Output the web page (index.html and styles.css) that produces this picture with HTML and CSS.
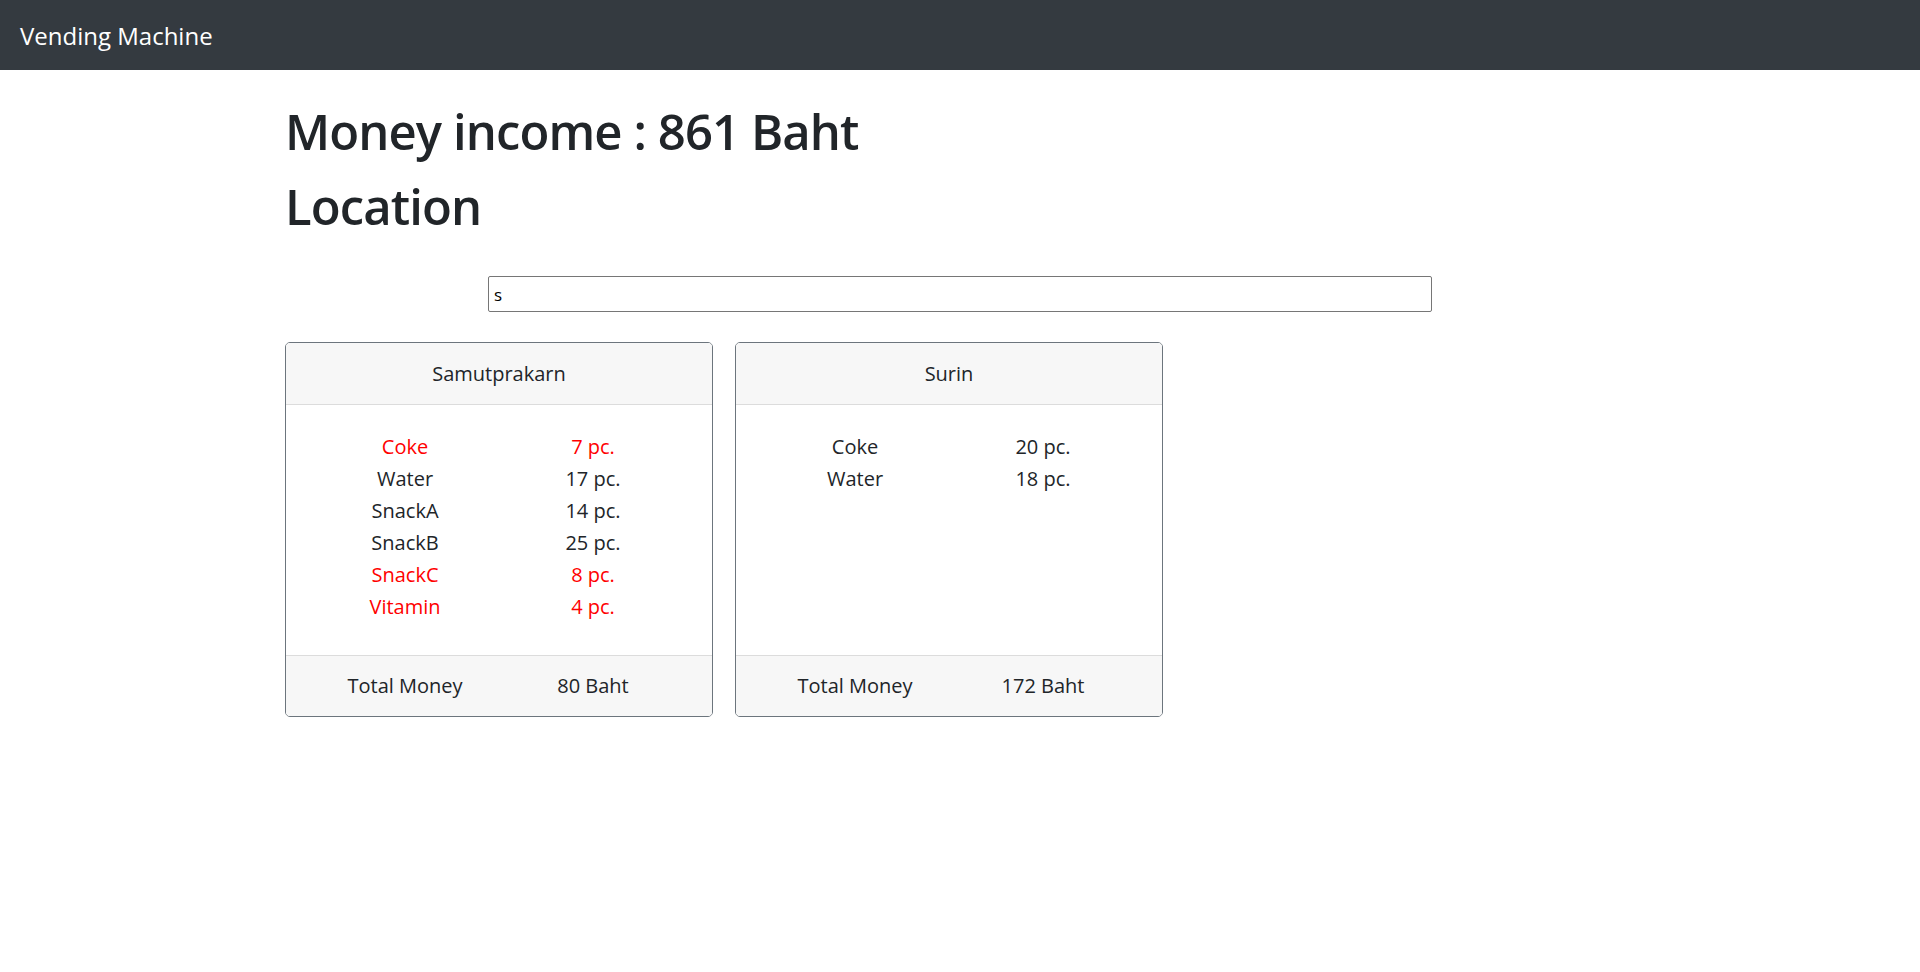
FILE: index.html
```html
<!DOCTYPE html>
<html lang="en">
<head>
<meta charset="utf-8">
<title>Vending Machine</title>
<link rel="stylesheet" href="styles.css">
</head>
<body>
<nav class="navbar">
  <span class="brand">Vending Machine</span>
</nav>
<main class="container">
  <h1 class="title">Money income : 861 Baht</h1>
  <h1 class="title second">Location</h1>
  <div class="search-row">
    <input class="search" type="text" value="s">
  </div>
  <div class="cards">
    <div class="card">
      <div class="card-header">Samutprakarn</div>
      <div class="card-body">
        <div class="row low"><span>Coke</span><span>7 pc.</span></div>
        <div class="row"><span>Water</span><span>17 pc.</span></div>
        <div class="row"><span>SnackA</span><span>14 pc.</span></div>
        <div class="row"><span>SnackB</span><span>25 pc.</span></div>
        <div class="row low"><span>SnackC</span><span>8 pc.</span></div>
        <div class="row low"><span>Vitamin</span><span>4 pc.</span></div>
      </div>
      <div class="card-footer row"><span>Total Money</span><span>80 Baht</span></div>
    </div>
    <div class="card">
      <div class="card-header">Surin</div>
      <div class="card-body">
        <div class="row"><span>Coke</span><span>20 pc.</span></div>
        <div class="row"><span>Water</span><span>18 pc.</span></div>
      </div>
      <div class="card-footer row"><span>Total Money</span><span>172 Baht</span></div>
    </div>
  </div>
</main>
</body>
</html>
```
FILE: styles.css
```css
* { box-sizing: border-box; }
html, body {
  margin: 0;
  padding: 0;
  background: #fff;
}
body {
  font-family: "Open Sans", "Noto Sans", sans-serif;
  font-size: 20px;
  color: #212529;
}
.navbar {
  height: 70px;
  background: #343a40;
  display: flex;
  align-items: center;
  padding: 0 20px;
}
.brand {
  color: #fff;
  font-size: 24px;
  line-height: 30px;
  padding-top: 1px;
}
.container {
  width: 1350px;
  margin: 0 auto;
  padding-top: 31px;
}
.title {
  margin: 0;
  font-size: 49px;
  font-weight: 600;
  line-height: 60px;
  letter-spacing: -0.9px;
}
.title.second {
  margin-top: 15px;
}
.search-row {
  display: flex;
  justify-content: center;
  margin-top: 40px;
}
.search {
  width: 944px;
  height: 36px;
  border: 1px solid #767676;
  border-radius: 2px;
  padding: 0 5px;
  font-family: "Open Sans", "Noto Sans", sans-serif;
  font-size: 17px;
  color: #000;
  outline: none;
}
.cards {
  display: grid;
  grid-template-columns: repeat(3, 428px);
  column-gap: 22px;
  margin-top: 30px;
}
.card {
  display: flex;
  flex-direction: column;
  border: 1px solid #6c757d;
  border-radius: 5px;
  overflow: hidden;
}
.card-header {
  background: #f7f7f7;
  border-bottom: 1px solid #dcdcdc;
  padding: 16px 25px 15px;
  line-height: 30px;
  text-align: center;
}
.card-body {
  flex: 1;
  padding: 26px 25px 32px;
}
.row {
  display: grid;
  grid-template-columns: 1fr 1fr;
  text-align: center;
  line-height: 32px;
}
.row.low {
  color: #ff0000;
}
.card-footer {
  background: #f7f7f7;
  border-top: 1px solid #dcdcdc;
  padding: 15px 25px;
  line-height: 30px;
}
```
